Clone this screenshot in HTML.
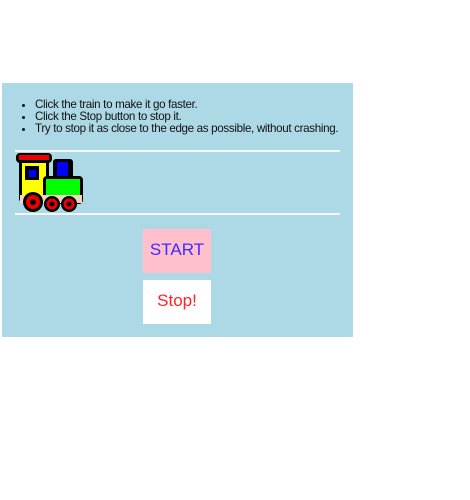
<!DOCTYPE html><html><head><style>
body{margin:0;background:#fff;font-family:"Liberation Sans",sans-serif}
#p{position:absolute;left:2px;top:83px;width:351px;height:254px;background:#add8e6}
ul{position:absolute;left:0;top:16px;margin:0;padding-left:33px;font-size:11.6px;letter-spacing:-0.33px;line-height:12px;color:#111;white-space:nowrap}
.hr{position:absolute;left:13px;width:325px;height:2px;background:#f4f8fa}
.b{position:absolute;left:141px;width:68px;height:44px;font-size:17px;text-align:center;line-height:42px}
</style></head><body><div id="p">
<ul><li>Click the train to make it go faster.</li><li>Click the Stop button to stop it.</li><li>Try to stop it as close to the edge as possible, without crashing.</li></ul>
<div class="hr" style="top:67px"></div>
<svg style="position:absolute;left:13px;top:69px" width="70" height="62" viewBox="0 0 70 62">
<rect x="1" y="1" width="36" height="10" rx="4" fill="#000"/><rect x="4" y="3" width="30" height="5" fill="#e00"/>
<rect x="4" y="8" width="30" height="42" rx="3" fill="#000"/><rect x="7" y="11" width="24" height="36" fill="#ff0"/>
<rect x="10" y="14" width="14" height="14" fill="#000"/><rect x="14" y="18" width="7" height="7" fill="#00f"/>
<rect x="38" y="7" width="20" height="22" rx="3" fill="#000"/><rect x="42" y="10" width="11" height="16" fill="#00f"/>
<rect x="28" y="24" width="40" height="28" rx="4" fill="#000"/><rect x="31" y="27" width="34" height="17" fill="#0f0"/>
<rect x="5" y="43" width="62" height="8" fill="#f3d4c0"/>
<circle cx="18" cy="50" r="10" fill="#000"/><circle cx="18" cy="50" r="7" fill="#e00"/><circle cx="18" cy="50" r="3" fill="#000"/>
<circle cx="37" cy="52" r="8" fill="#000"/><circle cx="37" cy="52" r="5.5" fill="#e00"/><circle cx="37" cy="52" r="2.5" fill="#000"/>
<circle cx="54" cy="52" r="8" fill="#000"/><circle cx="54" cy="52" r="5.5" fill="#e00"/><circle cx="54" cy="52" r="2.5" fill="#000"/>
</svg>
<div class="hr" style="top:130px"></div>
<div class="b" style="top:146px;background:#ffc0cb;color:#3b2bff">START</div>
<div class="b" style="top:197px;background:#fff;color:#f22">Stop!</div>
</div></body></html>
